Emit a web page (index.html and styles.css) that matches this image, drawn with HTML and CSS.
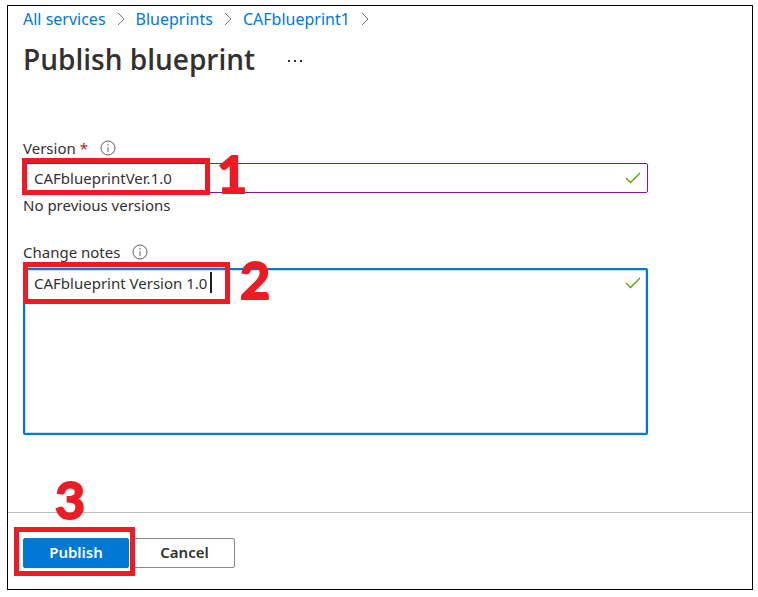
FILE: index.html
```html
<!DOCTYPE html>
<html lang="en">
<head>
<meta charset="utf-8">
<meta name="viewport" content="width=device-width, initial-scale=1">
<title>Publish blueprint</title>
<link rel="stylesheet" href="styles.css">
</head>
<body>
<div class="frame">
  <main class="content">
    <nav class="breadcrumb" aria-label="Breadcrumb">
      <a href="#">All services</a>
      <svg class="chevron" viewBox="0 0 8 14"><path d="M1 1l6 6-6 6"/></svg>
      <a href="#">Blueprints</a>
      <svg class="chevron" viewBox="0 0 8 14"><path d="M1 1l6 6-6 6"/></svg>
      <a href="#">CAFblueprint1</a>
      <svg class="chevron" viewBox="0 0 8 14"><path d="M1 1l6 6-6 6"/></svg>
    </nav>
    <header class="title-row">
      <h1>Publish blueprint</h1>
      <button class="more" type="button" aria-label="More">
        <svg viewBox="0 0 14 2"><path d="M0 0h2v2H0zM6 0h2v2H6zM12 0h2v2h-2z"/></svg>
      </button>
    </header>
    <form class="form" id="publish-form">
      <div class="label-row">
        <label for="version">Version <span class="required">*</span></label>
        <svg class="info" viewBox="0 0 16 16"><circle cx="8" cy="8" r="7"/><path d="M8 7v5M8 4v1.500"/></svg>
      </div>
      <div class="field">
        <input class="control" id="version" type="text" value="CAFblueprintVer.1.0">
        <svg class="check" viewBox="0 0 16 12"><path d="M1 6l4.500 4.500L15 1"/></svg>
        <div class="callout callout-version"><span class="step">1</span></div>
      </div>
      <p class="hint">No previous versions</p>
      <div class="label-row">
        <label for="notes">Change notes</label>
        <svg class="info" viewBox="0 0 16 16"><circle cx="8" cy="8" r="7"/><path d="M8 7v5M8 4v1.500"/></svg>
      </div>
      <div class="field">
        <textarea class="control notes" id="notes">CAFblueprint Version 1.0</textarea>
        <span class="caret"></span>
        <svg class="check" viewBox="0 0 16 12"><path d="M1 6l4.500 4.500L15 1"/></svg>
        <div class="callout callout-notes"><span class="step">2</span></div>
      </div>
    </form>
  </main>
  <footer class="footer">
    <div class="publish-wrap">
      <button class="button primary" type="submit" form="publish-form">Publish</button>
      <div class="callout callout-publish"><span class="step">3</span></div>
    </div>
    <button class="button" type="button">Cancel</button>
  </footer>
</div>
</body>
</html>
```
FILE: styles.css
```css
* {
  box-sizing: border-box;
}

body {
  margin: 0;
  padding: 5px 5px 7px 7px;
  background: #fff;
  color: #323130;
  font: 15px/20px "Noto Sans", "Open Sans", sans-serif;
}

.frame {
  display: flex;
  flex-direction: column;
  min-height: calc(100vh - 12px);
  border: 1px solid #000;
}

.content {
  flex: 1;
  padding: 3px 15px 0;
}

svg {
  display: block;
  flex: none;
  fill: none;
}

.breadcrumb {
  display: flex;
  align-items: center;
  gap: 11px;
  font-size: 16px;
}

.breadcrumb a {
  color: #0078d4;
  text-decoration: none;
}

.chevron {
  width: 8px;
  height: 14px;
  stroke: #797775;
}

.title-row {
  display: flex;
  align-items: center;
  gap: 33px;
  margin-top: 10px;
}

h1 {
  margin: 0;
  font-family: "Open Sans", "Noto Sans", sans-serif;
  font-size: 28px;
  font-weight: 600;
  line-height: 40px;
}

.more {
  padding: 3px 0 0;
  border: 0;
  background: none;
}

.more svg {
  width: 14px;
  height: 2px;
  fill: #323130;
}

.form {
  width: 88%;
  max-width: 625px;
  margin-top: 59px;
}

.label-row {
  display: flex;
  align-items: center;
  gap: 12px;
  margin-bottom: 5px;
}

.required {
  color: #a4262c;
}

.info {
  width: 16px;
  height: 16px;
  stroke: #605e5c;
}

.field {
  position: relative;
}

.control {
  display: block;
  width: 100%;
  height: 30px;
  padding: 0 32px 0 10px;
  border: 1px solid #881798;
  border-radius: 2px;
  outline: 0;
  background: #fff;
  color: inherit;
  font: inherit;
}

.notes {
  height: 167px;
  padding: 3px 32px 0 9px;
  border: 2px solid #0078d4;
  box-shadow: inset 0 0 0 1px #c7e0f4;
  resize: none;
}

.check {
  position: absolute;
  top: 9px;
  right: 7px;
  width: 16px;
  height: 12px;
  stroke: #57a300;
  stroke-width: 1.3;
}

.caret {
  position: absolute;
  top: 4px;
  left: 187px;
  width: 2px;
  height: 21px;
  background: #201f1e;
}

.hint {
  margin: 2px 0 27px;
}

.hint + .label-row {
  margin-bottom: 6px;
}

.callout {
  position: absolute;
  border: 5px solid #ed1c24;
  pointer-events: none;
}

.callout-version {
  top: -5px;
  left: -1px;
  width: 188px;
  height: 37px;
}

.callout-notes {
  top: -6px;
  left: 0;
  width: 207px;
  height: 42px;
}

.callout-publish {
  top: -11px;
  left: -9px;
  width: 121px;
  height: 49px;
}

.step {
  position: absolute;
  top: -16px;
  left: calc(100% + 12px);
  color: #ed1c24;
  font: 700 52px/52px Lato, sans-serif;
  -webkit-text-stroke: 2px #ed1c24;
}

.callout-notes .step {
  top: -14px;
  left: calc(100% + 15px);
}

.callout-publish .step {
  top: -59px;
  left: 36px;
}

.footer {
  display: flex;
  gap: 5px;
  padding: 25px 15px 21px;
  border-top: 1px solid #bdbdbd;
}

.publish-wrap {
  position: relative;
}

.button {
  min-width: 101px;
  height: 30px;
  padding: 0 0 2px;
  border: 1px solid #8a8886;
  border-radius: 2px;
  background: #fff;
  color: #323130;
  font: 600 15px/20px "Noto Sans", "Open Sans", sans-serif;
}

.primary {
  min-width: 106px;
  border-color: #0078d4;
  background: #0078d4;
  color: #fff;
}
```
